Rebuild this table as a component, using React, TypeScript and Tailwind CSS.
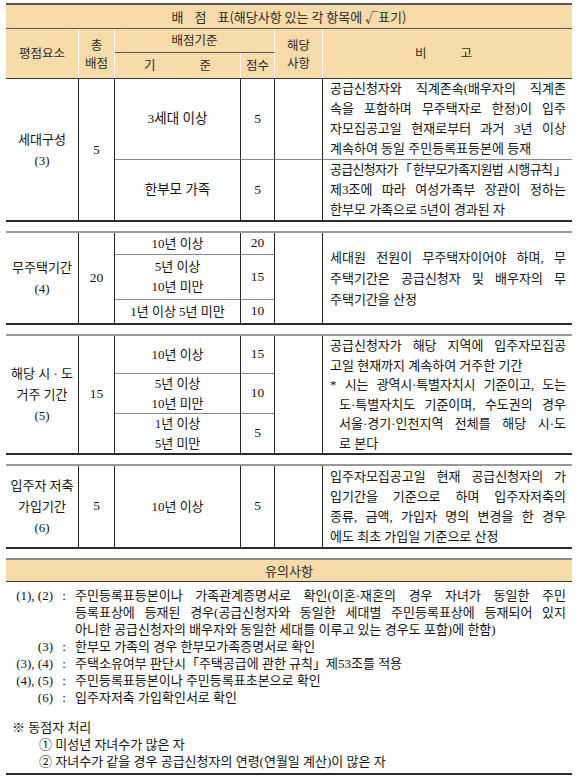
import React from "react";

function J({ children, className = "" }: { children: React.ReactNode; className?: string }) {
  return (
    <div className={"whitespace-nowrap text-justify [text-align-last:justify] " + className}>{children}</div>
  );
}

function L({ children, className = "" }: { children: React.ReactNode; className?: string }) {
  return <div className={"whitespace-nowrap " + className}>{children}</div>;
}

function Cell({ children, className = "" }: { children?: React.ReactNode; className?: string }) {
  return (
    <div className={"flex flex-col items-center justify-center text-center " + className}>{children}</div>
  );
}

export default function App() {
  return (
    <div className="w-[578px] bg-white px-[6px] pt-[3px] pb-[4px] text-[13px] text-[#141414] [font-family:'Liberation_Serif','Noto_Sans_CJK_KR',serif]">
      {/* header */}
      <div className="border-t-2 border-[#595959] bg-[#f7dba9] text-[#2b2b2b] [font-family:'Noto_Sans_CJK_KR',sans-serif]">
        <div className="flex h-[24px] items-center justify-center border-b border-[#555555] text-[13px]">
          <span>배</span>
          <span className="ml-[11px]">점</span>
          <span className="ml-[11px]">표(해당사항 있는 각 항목에 √표기)</span>
        </div>
        <div className="grid grid-cols-[73px_36px_126px_34px_48px_1fr] grid-rows-[24px_25px] border-b border-[#3a3a3a] text-[12.5px]">
          <Cell className="row-span-2 border-r border-white">평점요소</Cell>
          <Cell className="row-span-2 border-r border-white leading-[18px]">
            <span>총</span>
            <span>배점</span>
          </Cell>
          <Cell className="col-span-2 border-r border-b border-r-white border-b-[#555555]">배점기준</Cell>
          <Cell className="row-span-2 border-r border-white leading-[18px]">
            <span>해당</span>
            <span>사항</span>
          </Cell>
          <div className="row-span-2 flex items-center justify-center pr-[8px]">
            <span>비</span>
            <span className="ml-[34px]">고</span>
          </div>
          <div className="flex items-center justify-center border-r border-white">
            <span>기</span>
            <span className="ml-[44px]">준</span>
          </div>
          <Cell className="border-r border-white">점수</Cell>
        </div>
      </div>

      {/* 세대구성 */}
      <div className="grid grid-cols-[73px_36px_126px_34px_48px_1fr] grid-rows-[81px_60px] border-b-2 border-[#2b2b2b]">
        <Cell className="row-span-2 border-r border-[#262626] leading-[21px]">
          <div>세대구성</div>
          <div>(3)</div>
        </Cell>
        <Cell className="row-span-2 border-r border-[#262626]">5</Cell>
        <Cell className="border-r border-b border-r-[#262626] border-b-[#8a8a8a] text-[13.5px]">3세대 이상</Cell>
        <Cell className="border-r border-b border-r-[#262626] border-b-[#8a8a8a] text-[13.5px]">5</Cell>
        <div className="border-r border-b border-r-[#262626] border-b-[#8a8a8a]"></div>
        <div className="flex flex-col justify-center border-b border-[#8a8a8a] pl-[7px] pr-[6px] leading-[20px]">
          <J>공급신청자와 직계존속(배우자의 직계존</J>
          <J>속을 포함하며 무주택자로 한정)이 입주</J>
          <J>자모집공고일 현재로부터 과거 3년 이상</J>
          <L>계속하여 동일 주민등록표등본에 등재</L>
        </div>
        <Cell className="border-r border-[#262626] text-[13.5px]">한부모 가족</Cell>
        <Cell className="border-r border-[#262626] text-[13.5px]">5</Cell>
        <div className="border-r border-[#262626]"></div>
        <div className="flex flex-col justify-center pl-[7px] pr-[6px] leading-[20px]">
          <J className="tracking-[-0.7px]">공급신청자가「한부모가족지원법 시행규칙」</J>
          <J>제3조에 따라 여성가족부 장관이 정하는</J>
          <L>한부모 가족으로 5년이 경과된 자</L>
        </div>
      </div>

      {/* 무주택기간 */}
      <div className="mt-[9px] grid grid-cols-[73px_36px_126px_34px_48px_1fr] grid-rows-[22px_45px_23px] border-t-2 border-b-2 border-t-[#9a9a9a] border-b-[#2b2b2b]">
        <Cell className="row-span-3 border-r border-[#262626] leading-[21px]">
          <div>무주택기간</div>
          <div>(4)</div>
        </Cell>
        <Cell className="row-span-3 border-r border-[#262626] text-[13.5px]">20</Cell>
        <Cell className="border-r border-b border-r-[#262626] border-b-[#8a8a8a]">10년 이상</Cell>
        <Cell className="border-r border-b border-r-[#262626] border-b-[#8a8a8a] text-[13.5px]">20</Cell>
        <div className="row-span-3 border-r border-[#262626]"></div>
        <div className="row-span-3 flex flex-col justify-center pl-[7px] pr-[6px] leading-[21px]">
          <J>세대원 전원이 무주택자이어야 하며, 무</J>
          <J>주택기간은 공급신청자 및 배우자의 무</J>
          <L>주택기간을 산정</L>
        </div>
        <Cell className="border-r border-b border-r-[#262626] border-b-[#8a8a8a] leading-[20px]">
          <div>5년 이상</div>
          <div>10년 미만</div>
        </Cell>
        <Cell className="border-r border-b border-r-[#262626] border-b-[#8a8a8a] text-[13.5px]">15</Cell>
        <Cell className="border-r border-[#262626]">1년 이상 5년 미만</Cell>
        <Cell className="border-r border-[#262626] text-[13.5px]">10</Cell>
      </div>

      {/* 해당 시·도 거주 기간 */}
      <div className="mt-[9px] grid grid-cols-[73px_36px_126px_34px_48px_1fr] grid-rows-[38px_40px_39px] border-t-2 border-b-2 border-t-[#9a9a9a] border-b-[#2b2b2b]">
        <Cell className="row-span-3 border-r border-[#262626] leading-[21px]">
          <div>해당 시 · 도</div>
          <div>거주 기간</div>
          <div>(5)</div>
        </Cell>
        <Cell className="row-span-3 border-r border-[#262626] text-[13.5px]">15</Cell>
        <Cell className="border-r border-b border-r-[#262626] border-b-[#8a8a8a]">10년 이상</Cell>
        <Cell className="border-r border-b border-r-[#262626] border-b-[#8a8a8a] text-[13.5px]">15</Cell>
        <div className="row-span-3 border-r border-[#262626]"></div>
        <div className="row-span-3 flex flex-col justify-center pl-[7px] pr-[6px] leading-[19.5px]">
          <J>공급신청자가 해당 지역에 입주자모집공</J>
          <L>고일 현재까지 계속하여 거주한 기간</L>
          <J className="tracking-[-0.15px]">* 시는 광역시·특별자치시 기준이고, 도는</J>
          <J className="pl-[9px]">도·특별자치도 기준이며, 수도권의 경우</J>
          <J className="pl-[9px]">서울·경기·인천지역 전체를 해당 시·도</J>
          <L className="pl-[9px]">로 본다</L>
        </div>
        <Cell className="border-r border-b border-r-[#262626] border-b-[#8a8a8a] leading-[20px]">
          <div>5년 이상</div>
          <div>10년 미만</div>
        </Cell>
        <Cell className="border-r border-b border-r-[#262626] border-b-[#8a8a8a] text-[13.5px]">10</Cell>
        <Cell className="border-r border-[#262626] leading-[20px]">
          <div>1년 이상</div>
          <div>5년 미만</div>
        </Cell>
        <Cell className="border-r border-[#262626] text-[13.5px]">5</Cell>
      </div>

      {/* 입주자 저축 가입기간 */}
      <div className="mt-[9px] grid grid-cols-[73px_36px_126px_34px_48px_1fr] grid-rows-[81px] border-t-2 border-b-2 border-t-[#9a9a9a] border-b-[#2b2b2b]">
        <Cell className="border-r border-[#262626] leading-[21px]">
          <div>입주자 저축</div>
          <div>가입기간</div>
          <div>(6)</div>
        </Cell>
        <Cell className="border-r border-[#262626] text-[13.5px]">5</Cell>
        <Cell className="border-r border-[#262626]">10년 이상</Cell>
        <Cell className="border-r border-[#262626] text-[13.5px]">5</Cell>
        <div className="border-r border-[#262626]"></div>
        <div className="flex flex-col justify-center pl-[7px] pr-[6px] leading-[20px]">
          <J>입주자모집공고일 현재 공급신청자의 가</J>
          <J>입기간을 기준으로 하며 입주자저축의</J>
          <J>종류, 금액, 가입자 명의 변경을 한 경우</J>
          <L>에도 최초 가입일 기준으로 산정</L>
        </div>
      </div>

      {/* 유의사항 */}
      <div className="mt-[9px] border-t-2 border-b-2 border-t-[#8c8c8c] border-b-[#2b2b2b]">
        <div className="flex h-[22px] items-center justify-center border-b border-[#3a3a3a] bg-[#f7dba9] text-[13px] text-[#2b2b2b] [font-family:'Noto_Sans_CJK_KR',sans-serif]">
          유의사항
        </div>
        <div className="pl-[6px] pr-[6px] pt-[5px] pb-[3px] leading-[17px]">
          <div className="grid grid-cols-[41px_22px_1fr]">
            <div className="whitespace-nowrap text-right">(1), (2)</div>
            <div className="text-center">:</div>
            <div>
              <J>주민등록표등본이나 가족관계증명서로 확인(이혼·재혼의 경우 자녀가 동일한 주민</J>
              <J>등록표상에 등재된 경우(공급신청자와 동일한 세대별 주민등록표상에 등재되어 있지</J>
              <L>아니한 공급신청자의 배우자와 동일한 세대를 이루고 있는 경우도 포함)에 한함)</L>
            </div>
            <div className="whitespace-nowrap text-right">(3)</div>
            <div className="text-center">:</div>
            <L>한부모 가족의 경우 한부모가족증명서로 확인</L>
            <div className="whitespace-nowrap text-right">(3), (4)</div>
            <div className="text-center">:</div>
            <L>주택소유여부 판단시「주택공급에 관한 규칙」제53조를 적용</L>
            <div className="whitespace-nowrap text-right">(4), (5)</div>
            <div className="text-center">:</div>
            <L>주민등록표등본이나 주민등록표초본으로 확인</L>
            <div className="whitespace-nowrap text-right">(6)</div>
            <div className="text-center">:</div>
            <L>입주자저축 가입확인서로 확인</L>
          </div>
          <div className="mt-[13px]">
            <L>※ 동점자 처리</L>
            <L className="pl-[27px]">① 미성년 자녀수가 많은 자</L>
            <L className="pl-[27px]">② 자녀수가 같을 경우 공급신청자의 연령(연월일 계산)이 많은 자</L>
          </div>
        </div>
      </div>
    </div>
  );
}
